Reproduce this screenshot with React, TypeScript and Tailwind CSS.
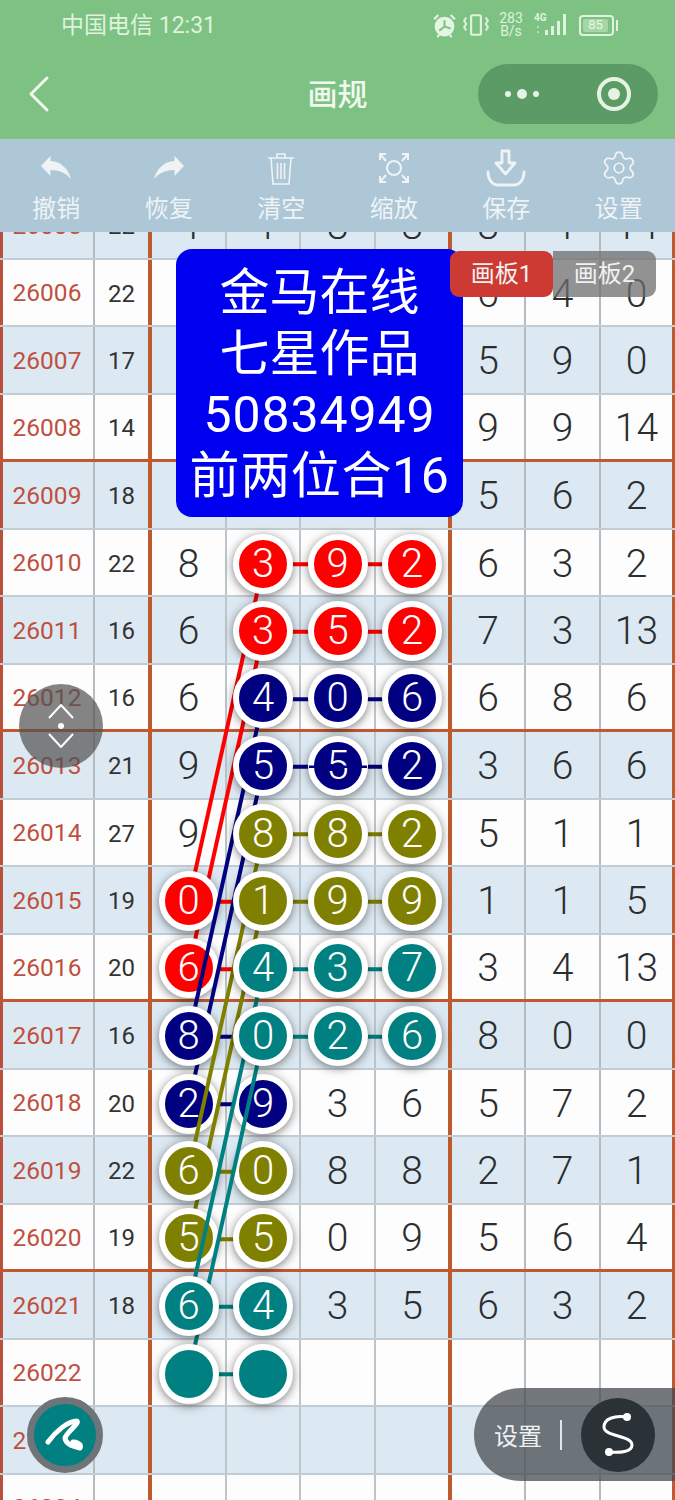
import { ChevronLeft, Settings } from "lucide-react";

const digitFont = "font-['Roboto','Noto_Sans_CJK_SC',sans-serif]";

type Group = "red" | "navy" | "olive" | "teal";

const ballBg: Record<Group, string> = {
  red: "bg-[#ff0000] z-[11]",
  navy: "bg-[#000080] z-[21]",
  olive: "bg-[#808000] z-[31]",
  teal: "bg-[#008080] z-[41]",
};
const hex: Record<Group, string> = { red: "#ff0000", navy: "#000080", olive: "#808000", teal: "#008080" };
const lineZ: Record<Group, string> = { red: "z-[10]", navy: "z-[20]", olive: "z-[30]", teal: "z-[40]" };

interface Row {
  no: number;
  sum: string;
  cells: string[];
  balls?: (Group | null)[];
}

const N = null;
const rows: Row[] = [
  { no: 26005, sum: "22", cells: ["4", "4", "8", "8", "8", "4", "14"] },
  { no: 26006, sum: "22", cells: ["", "", "", "", "6", "4", "0"] },
  { no: 26007, sum: "17", cells: ["", "", "", "", "5", "9", "0"] },
  { no: 26008, sum: "14", cells: ["", "", "", "", "9", "9", "14"] },
  { no: 26009, sum: "18", cells: ["", "", "", "", "5", "6", "2"] },
  { no: 26010, sum: "22", cells: ["8", "3", "9", "2", "6", "3", "2"], balls: [N, "red", "red", "red"] },
  { no: 26011, sum: "16", cells: ["6", "3", "5", "2", "7", "3", "13"], balls: [N, "red", "red", "red"] },
  { no: 26012, sum: "16", cells: ["6", "4", "0", "6", "6", "8", "6"], balls: [N, "navy", "navy", "navy"] },
  { no: 26013, sum: "21", cells: ["9", "5", "5", "2", "3", "6", "6"], balls: [N, "navy", "navy", "navy"] },
  { no: 26014, sum: "27", cells: ["9", "8", "8", "2", "5", "1", "1"], balls: [N, "olive", "olive", "olive"] },
  { no: 26015, sum: "19", cells: ["0", "1", "9", "9", "1", "1", "5"], balls: ["red", "olive", "olive", "olive"] },
  { no: 26016, sum: "20", cells: ["6", "4", "3", "7", "3", "4", "13"], balls: ["red", "teal", "teal", "teal"] },
  { no: 26017, sum: "16", cells: ["8", "0", "2", "6", "8", "0", "0"], balls: ["navy", "teal", "teal", "teal"] },
  { no: 26018, sum: "20", cells: ["2", "9", "3", "6", "5", "7", "2"], balls: ["navy", "navy"] },
  { no: 26019, sum: "22", cells: ["6", "0", "8", "8", "2", "7", "1"], balls: ["olive", "olive"] },
  { no: 26020, sum: "19", cells: ["5", "5", "0", "9", "5", "6", "4"], balls: ["olive", "olive"] },
  { no: 26021, sum: "18", cells: ["6", "4", "3", "5", "6", "3", "2"], balls: ["teal", "teal"] },
  { no: 26022, sum: "", cells: ["", "", "", "", "", "", ""], balls: ["teal", "teal"] },
  { no: 26023, sum: "", cells: ["", "", "", "", "", "", ""] },
  { no: 26024, sum: "", cells: ["", "", "", "", "", "", ""] },
];

const colX = [188.5, 263.5, 338, 412.5];
const rowY = (no: number) => 34.75 + (no - 26005) * 67.5;

const slants: [Group, number][] = [
  ["red", 26010],
  ["red", 26011],
  ["navy", 26012],
  ["navy", 26013],
  ["olive", 26014],
  ["olive", 26015],
  ["teal", 26016],
  ["teal", 26017],
];

const cellClass = [
  "border-r-[4px] border-r-[#bd5a2e] w-[57px]",
  "border-r-2 border-r-[#bcc5ca] w-[75px]",
  "border-r-2 border-r-[#bcc5ca] w-[74px]",
  "border-r-2 border-r-[#bcc5ca] w-[75px]",
  "border-r-[4px] border-r-[#bd5a2e] w-[76px]",
  "border-r-2 border-r-[#b4bcc1] w-[74px]",
  "border-r-2 border-r-[#b4bcc1] w-[75px]",
  "border-r-[3px] border-r-[#bd5a2e] w-[74px]",
];

function Ball({ group, text }: { group: Group; text: string }) {
  return (
    <div
      className={`relative ${ballBg[group]} w-[60px] h-[60px] shrink-0 rounded-full border-[6px] border-white flex items-center justify-center text-white text-[40px] font-[350] shadow-[0_2px_10px_rgba(0,0,0,0.5)]`}
    >
      {text}
    </div>
  );
}

function SheetRow({ row }: { row: Row }) {
  const odd = row.no % 2 === 1;
  const thick = row.no % 4 === 0;
  return (
    <div
      className={`flex h-[67.5px] ${odd ? "bg-[#dde9f2]" : "bg-[#fdfdfd]"} ${
        thick ? "border-b-[3px] border-b-[#c2582f]" : "border-b-2 border-b-[#c3ccd2]"
      } ${digitFont}`}
    >
      <div className="w-[95px] shrink-0 pt-[3px] pr-[2px] border-l-[3px] border-l-[#b9503c] border-r-2 border-r-[#b4bcc1] flex items-center justify-center text-[24.5px] text-[#bf5040]">
        {row.no}
      </div>
      <div className={`${cellClass[0]} shrink-0 pt-[3px] flex items-center justify-center text-[24px] text-[#333333]`}>
        {row.sum}
      </div>
      {row.cells.map((value, i) => (
        <div
          key={i}
          className={`${cellClass[i + 1]} shrink-0 pt-[3px] flex items-center justify-center text-[39px] font-[350] text-[#2b2e30]`}
        >
          {row.balls?.[i] ? <Ball group={row.balls[i] as Group} text={value} /> : value}
        </div>
      ))}
    </div>
  );
}

function Lines() {
  const groups: Group[] = ["red", "navy", "olive", "teal"];
  return (
    <>
      {groups.map((g) => (
        <svg
          key={g}
          width="675"
          height="1400"
          className={`absolute top-0 left-0 pointer-events-none ${lineZ[g]}`}
        >
          {slants
            .filter(([c]) => c === g)
            .map(([c, no]) => (
              <line
                key={no}
                x1={colX[1]}
                y1={rowY(no)}
                x2={colX[0]}
                y2={rowY(no + 5)}
                stroke={hex[c]}
                strokeWidth="4"
              />
            ))}
          {rows.map((r) =>
            (r.balls ?? []).slice(0, -1).map((b, i) => {
              if (b !== g || !r.balls?.[i + 1]) return null;
              return (
                <line
                  key={`${r.no}-${i}`}
                  x1={colX[i]}
                  y1={rowY(r.no)}
                  x2={colX[i + 1]}
                  y2={rowY(r.no)}
                  stroke={hex[b]}
                  strokeWidth="4"
                />
              );
            })
          )}
        </svg>
      ))}
      <svg width="675" height="1400" className="absolute top-0 left-0 pointer-events-none z-[50]">
        <line x1="309" y1={rowY(26013)} x2="367" y2={rowY(26013)} stroke="#000080" strokeWidth="2.5" />
      </svg>
    </>
  );
}

function StatusIcons() {
  return (
    <div className="absolute top-[12px] left-[432px] flex items-center h-[26px] text-[#dff2dd]">
      <svg width="25" height="25" viewBox="0 0 24 24" className="mr-[6px]">
        <circle cx="12" cy="13" r="9.5" fill="#e6f5e3" />
        <path d="M12 7v6l-5 4M12 13l6 2" stroke="#7dc283" strokeWidth="2" fill="none" />
        <path d="M2 6l4-4M22 6l-4-4M5 23l2-2M19 23l-2-2" stroke="#e6f5e3" strokeWidth="2" />
      </svg>
      <svg width="26" height="26" viewBox="0 0 24 24" className="mr-[9px]">
        <rect x="7.5" y="3" width="9" height="18" rx="1.5" fill="none" stroke="#dff2dd" strokeWidth="2" />
        <path d="M3 5l-2 3 2 3-2 3 2 3M21 5l2 3-2 3 2 3-2 3" fill="none" stroke="#dff2dd" strokeWidth="1.8" />
      </svg>
      <div className={`w-[26px] mr-[10px] text-center text-[14px] leading-[13px] ${digitFont}`}>
        <div>283</div>
        <div>B/s</div>
      </div>
      <svg width="36" height="26" viewBox="0 0 36 26" className="mr-[9px]">
        <text x="0" y="9" fontSize="10" fontWeight="700" fill="#dff2dd" fontFamily="Roboto">4G</text>
        <rect x="3" y="14" width="2" height="2" fill="#b7e0b8" />
        <rect x="3" y="19" width="2" height="2" fill="#b7e0b8" />
        <rect x="11" y="18" width="3" height="5" fill="#dff2dd" />
        <rect x="17" y="14" width="3" height="9" fill="#dff2dd" />
        <rect x="23" y="9" width="3" height="14" fill="#dff2dd" />
        <rect x="29" y="2" width="3" height="21" fill="#dff2dd" />
      </svg>
      <div className="relative w-[35px] h-[21px] rounded-[4px] border-2 border-[#dff2dd] p-[2px]">
        <div className={`w-[25px] h-full rounded-[2px] bg-[#a5d6a5] flex items-center justify-center text-[13px] text-[#eaf7e8] ${digitFont}`}>
          85
        </div>
        <div className="absolute top-[3px] -right-[6px] w-[2px] h-[11px] bg-[#dff2dd]" />
      </div>
    </div>
  );
}

function Header() {
  return (
    <div className="relative h-[139px] bg-[#7dc283] font-['Roboto','Noto_Sans_CJK_SC',sans-serif]">
      <div className="absolute top-[11px] left-[61px] text-[23px] leading-[30px] text-[#dff2dd]">中国电信 12:31</div>
      <StatusIcons />
      <ChevronLeft className="absolute top-[62px] left-[7px] text-[#f0f8ef]" size={64} strokeWidth={1.1} />
      <div className="absolute top-[75px] left-0 w-full text-center text-[30px] leading-[40px] font-medium text-[#f0f8ef]">画规</div>
      <div className="absolute top-[64px] left-[478px] w-[180px] h-[60px] rounded-full bg-[#5d9b66] flex items-center">
        <div className="ml-[27px] flex items-center gap-[6px]">
          <div className="w-[6px] h-[6px] rounded-full bg-[#e6f3e2]" />
          <div className="w-[10px] h-[10px] rounded-full bg-[#e6f3e2]" />
          <div className="w-[6px] h-[6px] rounded-full bg-[#e6f3e2]" />
        </div>
        <div className="ml-[58px] w-[34px] h-[34px] rounded-full border-[4px] border-[#e6f3e2] flex items-center justify-center">
          <div className="w-[12px] h-[12px] rounded-full bg-[#e6f3e2]" />
        </div>
      </div>
    </div>
  );
}

const toolIcon = "#eef4f6";

function ReplyIcon({ flip }: { flip?: boolean }) {
  return (
    <svg width="30" height="24" viewBox="0 0 30 24" className={flip ? "-scale-x-100" : ""} fill={toolIcon}>
      <path d="M0 10L9.5 0v5C20 5 28 14 30 23 25 17 18 14 9.5 14v6z" />
    </svg>
  );
}

function TrashIcon() {
  return (
    <svg width="28" height="33" viewBox="0 0 28 33" fill="none" stroke={toolIcon} strokeWidth="1.6">
      <path d="M1 6h26M10 6V2h8v4M4 6l2 26h16l2-26M10.5 11v16M14 11v16M17.5 11v16" />
    </svg>
  );
}

function ScaleIcon() {
  return (
    <svg width="32" height="32" viewBox="0 0 32 32" fill="none" stroke={toolIcon} strokeWidth="2">
      <circle cx="16" cy="16" r="7" />
      <path d="M2 8V2h6M2 2l6 7M30 8V2h-6M30 2l-6 7M2 24v6h6M2 30l6-7M30 24v6h-6M30 30l-6-7" />
    </svg>
  );
}

function SaveIcon() {
  return (
    <svg width="40" height="38" viewBox="0 0 40 38" fill="none" stroke={toolIcon} strokeWidth="2.8">
      <path d="M16 2h7v12h6L19.5 25 10 14h6z" strokeLinejoin="round" />
      <path d="M2 23c0 7 4 13 10 13h16c6 0 10-6 10-13" strokeLinecap="round" />
    </svg>
  );
}

const tools = [
  { label: "撤销", icon: <ReplyIcon /> },
  { label: "恢复", icon: <ReplyIcon flip /> },
  { label: "清空", icon: <TrashIcon /> },
  { label: "缩放", icon: <ScaleIcon /> },
  { label: "保存", icon: <SaveIcon /> },
  { label: "设置", icon: <Settings size={38} color={toolIcon} strokeWidth={1.1} /> },
];

function Toolbar() {
  return (
    <div className="relative z-[60] h-[93px] bg-[#adc7d6] grid grid-cols-6 font-['Noto_Sans_CJK_SC',sans-serif]">
      {tools.map((t) => (
        <div key={t.label} className="flex flex-col items-center">
          <div className="h-[50px] pt-[8px] flex items-center justify-center">{t.icon}</div>
          <div className="text-[24px] leading-[36px] text-[#eef3f6]">{t.label}</div>
        </div>
      ))}
    </div>
  );
}

function Overlays() {
  return (
    <>
      <div className="absolute z-[60] top-[249px] left-[176px] w-[287px] h-[268px] pt-[4px] rounded-[16px] bg-[#0000f0] flex flex-col items-center justify-center text-white text-[50px] leading-[61px] font-['Roboto','Noto_Sans_CJK_SC',sans-serif]">
        <div>金马在线</div>
        <div>七星作品</div>
        <div className="tracking-[0.9px]">50834949</div>
        <div className="tracking-[0.6px]">前两位合16</div>
      </div>
      <div className="absolute z-[61] top-[251px] left-[450px] flex text-[24px] leading-[47px] text-[#f1f1f1] font-['Roboto','Noto_Sans_CJK_SC',sans-serif]">
        <div className="w-[103px] h-[46px] rounded-[9px] bg-[#cc3a33] text-center">画板1</div>
        <div className="w-[103px] h-[46px] rounded-r-[9px] bg-[#6e6e6e]/75 text-center">画板2</div>
      </div>
      <div className="absolute z-[70] top-[684px] left-[19px] w-[84px] h-[84px] rounded-full bg-[#505050]/70 flex items-center justify-center">
        <svg width="26" height="44" viewBox="0 0 26 44" fill="none" stroke="white" strokeWidth="2">
          <path d="M1 14L13 1l12 13M1 30l12 13 12-13" />
          <circle cx="13" cy="22" r="3" fill="white" stroke="none" />
        </svg>
      </div>
      <div className="absolute z-[70] top-[1397px] left-[27px] w-[76px] h-[76px] rounded-full border-[7px] border-[#6e7478] bg-[#008080] flex items-center justify-center">
        <svg width="46" height="40" viewBox="0 0 46 40" fill="none" stroke="white" strokeWidth="5" strokeLinecap="round" strokeLinejoin="round">
          <path d="M6 27C14 16 26 6 35 6c3 2-11 12-12 17 1 7 9 9 15 10 2-5-5-6-7-6" />
        </svg>
      </div>
      <div className="absolute z-[70] top-[1388px] left-[474px] w-[201px] h-[93px] rounded-l-full bg-[#464b50]/75 flex items-center font-['Noto_Sans_CJK_SC',sans-serif]">
        <div className="ml-[20px] text-[24px] leading-[30px] text-[#eef1f2]">设置</div>
        <div className="ml-[18px] w-[2px] h-[30px] bg-[#e2e6e8]" />
        <div className="ml-[19px] w-[74px] h-[74px] rounded-full bg-[#2a3238] flex items-center justify-center">
          <svg width="44" height="50" viewBox="0 0 44 50" fill="none" stroke="white" strokeWidth="3">
            <path d="M31 7C18 5 8 9 8 17c0 10 28 8 28 18 0 7-12 8-23 7" />
            <circle cx="31" cy="7" r="4" fill="white" stroke="none" />
            <circle cx="13" cy="42" r="4" fill="white" stroke="none" />
          </svg>
        </div>
      </div>
    </>
  );
}

export default function App() {
  return (
    <div className="relative w-[675px] h-[1500px] overflow-hidden bg-white">
      <Header />
      <Toolbar />
      <div className="h-[1268px] overflow-hidden">
        <div className="relative -mt-[40px]">
          {rows.map((row) => (
            <SheetRow key={row.no} row={row} />
          ))}
          <Lines />
        </div>
      </div>
      <Overlays />
    </div>
  );
}
